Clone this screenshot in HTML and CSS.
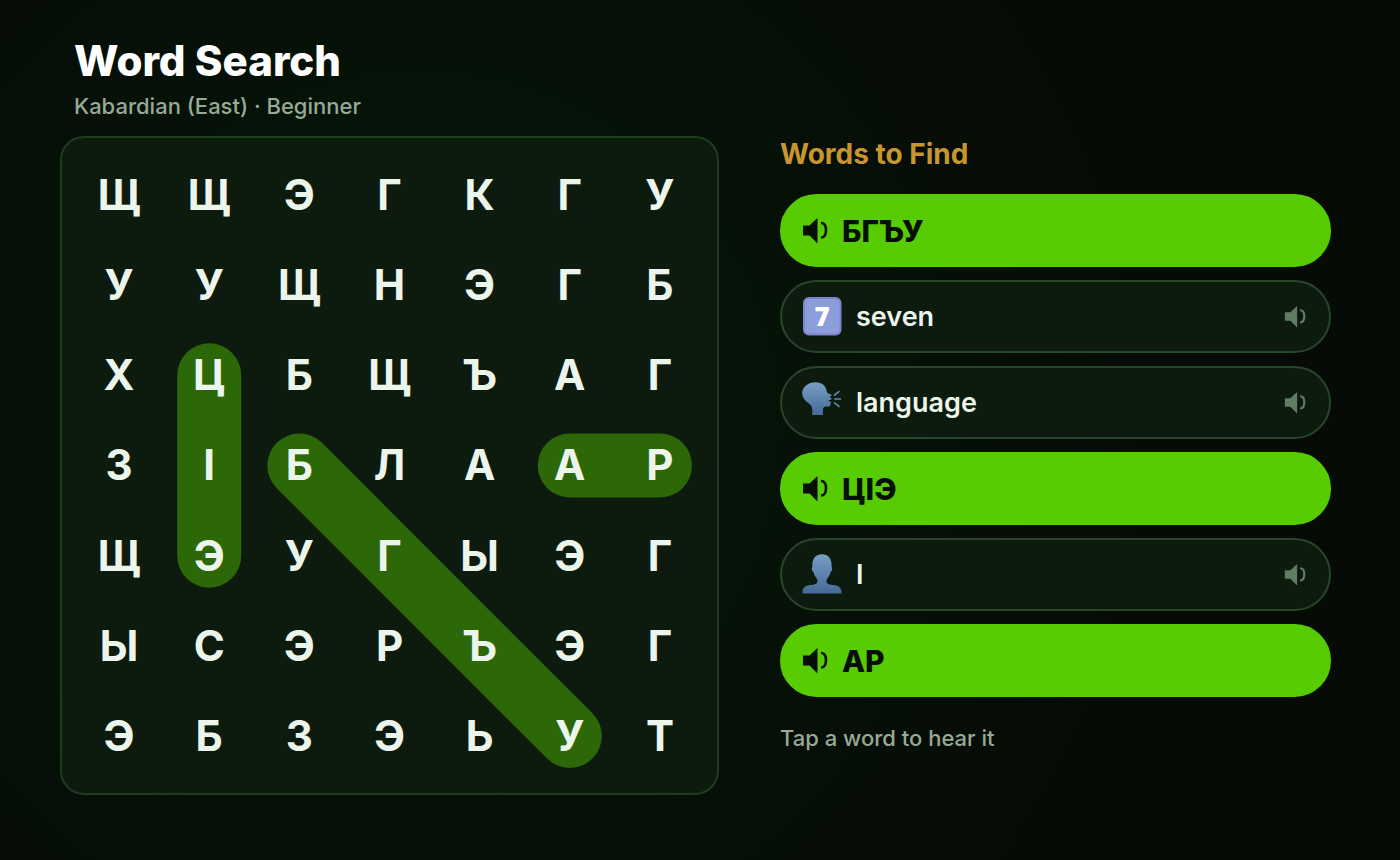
FILE: index.html
```html
<!DOCTYPE html>
<html lang="en">

<head>
    <meta charset="UTF-8">
    <meta name="viewport" content="width=device-width, initial-scale=1.0">
    <title>Word Search</title>
    <link rel="stylesheet" href="styles.css">
</head>

<body>
    <!-- shared icons -->
    <svg class="sprite" aria-hidden="true">
        <symbol id="speaker" viewBox="0 0 26 26">
            <path d="M1 7.500h6.500L15.500 0v25.500L7.500 17.500H1z" fill="currentColor" />
            <path d="M19 5c3.200 0 5 3 5 7.200s-1.800 7.300-5 7.300" fill="none" stroke="currentColor" stroke-width="2.600" />
        </symbol>
        <linearGradient id="blue" x1="0" y1="0" x2="0" y2="1">
            <stop offset="0" stop-color="#789fc4" />
            <stop offset="1" stop-color="#456a98" />
        </linearGradient>
    </svg>

    <main>
        <header>
            <h1>Word Search</h1>
            <p class="subtitle">Kabardian (East) · Beginner</p>
        </header>

        <section class="board">
            <svg class="marks" viewBox="0 0 7 7" aria-hidden="true">
                <path d="M1.500 2.500V4.500M2.500 3.500L5.500 6.500M5.500 3.500H6.500" />
            </svg>
            <div class="letters">
                <span>Щ</span><span>Щ</span><span>Э</span><span>Г</span><span>К</span><span>Г</span><span>У</span>
                <span>У</span><span>У</span><span>Щ</span><span>Н</span><span>Э</span><span>Г</span><span>Б</span>
                <span>Х</span><span>Ц</span><span>Б</span><span>Щ</span><span>Ъ</span><span>А</span><span>Г</span>
                <span>З</span><span>І</span><span>Б</span><span>Л</span><span>А</span><span>А</span><span>Р</span>
                <span>Щ</span><span>Э</span><span>У</span><span>Г</span><span>Ы</span><span>Э</span><span>Г</span>
                <span>Ы</span><span>С</span><span>Э</span><span>Р</span><span>Ъ</span><span>Э</span><span>Г</span>
                <span>Э</span><span>Б</span><span>З</span><span>Э</span><span>Ь</span><span>У</span><span>Т</span>
            </div>
        </section>

        <section class="words">
            <h2>Words to Find</h2>
            <ul>
                <li><button type="button" class="word found">
                    <svg class="speaker"><use href="#speaker" /></svg>
                    <span>БГЪУ</span>
                </button></li>
                <li><button type="button" class="word">
                    <svg class="picture" viewBox="0 0 40 40" aria-hidden="true">
                        <rect x="1" y="1" width="38.500" height="38.500" rx="6" fill="#7986cb" />
                        <rect x="3" y="3" width="34.500" height="34.500" rx="4" fill="#8c9eda" />
                        <text class="digit" x="20" y="30" text-anchor="middle">7</text>
                    </svg>
                    <span>seven</span>
                    <svg class="speaker"><use href="#speaker" /></svg>
                </button></li>
                <li><button type="button" class="word">
                    <svg class="picture" viewBox="0 0 40 40" aria-hidden="true">
                        <path fill="url(#blue)" d="M10 33C10.500 29 10.500 26 9 23.500C7.500 21.500 5 20.500 3 18C1 15.500 0 13.500 .2 10.500C.6 4.500 6.500 .2 13.500 .2C20 .2 24.300 4 24.700 9.500C24.800 11 26.500 11.300 29.500 13C30.200 13.700 29 14.300 27.300 14.800C27.800 15.700 29.800 16 29.600 17C29.400 18 26.500 18.200 26.500 18.700C26.500 19.200 29.300 19.500 29.200 20.500C29.100 21.200 28.200 21 28.400 22C28.600 24 27.500 24.800 25.500 24.600C22.500 24.300 21.300 25 21 27.500C20.800 29.500 21 31 21 33Z" />
                        <path fill="none" stroke="#608cb4" stroke-width="1.600" d="M32.300 17H39M32 13.500L37.500 9.200M32 20.500L37.500 24.900" />
                    </svg>
                    <span>language</span>
                    <svg class="speaker"><use href="#speaker" /></svg>
                </button></li>
                <li><button type="button" class="word found">
                    <svg class="speaker"><use href="#speaker" /></svg>
                    <span>ЦІЭ</span>
                </button></li>
                <li><button type="button" class="word">
                    <svg class="picture" viewBox="0 0 40 40" aria-hidden="true">
                        <path fill="url(#blue)" d="M.5 39.500C.3 35 2 32.500 6 31.500C9 30.800 14 31 15.300 28.500C16 27 15.300 25.500 14.500 24.200C13 22.500 12 20.500 11.500 18C10 17.500 9.300 14 10.400 13C9.800 5.500 13 .3 20 .3C27 .3 30.200 5.500 29.600 13C30.700 14 30 17.500 28.500 18C28 20.500 27 22.500 25.500 24.200C24.700 25.500 24 27 24.700 28.500C26 31 31 30.800 34 31.500C38 32.500 39.700 35 39.500 39.500Z" />
                    </svg>
                    <span>I</span>
                    <svg class="speaker"><use href="#speaker" /></svg>
                </button></li>
                <li><button type="button" class="word found">
                    <svg class="speaker"><use href="#speaker" /></svg>
                    <span>АР</span>
                </button></li>
            </ul>
            <p class="hint">Tap a word to hear it</p>
        </section>
    </main>
</body>

</html>
```
FILE: styles.css
```css
* {
    box-sizing: border-box;
}

body {
    margin: 0;
    min-height: 100vh;
    background: #060b06 radial-gradient(circle at 30% 50%, #05190a 0, #060b06 720px);
    color: #ebf5eb;
    font-family: Inter, "Noto Sans", sans-serif;
}

h1,
h2,
p,
ul {
    margin: 0;
    padding: 0;
}

.sprite {
    position: absolute;
    width: 0;
    height: 0;
}

main {
    display: grid;
    grid-template-columns: 659fr 551fr;
    column-gap: 61px;
    row-gap: 16px;
    padding: 36px 69px 64px 60px;
}

header {
    grid-column: 1 / -1;
    padding-left: 14px;
}

h1 {
    color: #fff;
    font-size: 42px;
    font-weight: 800;
    line-height: 50px;
}

.subtitle,
.hint {
    color: #96aa96;
    font-size: 22px;
    font-weight: 500;
    line-height: 28px;
}

.subtitle {
    margin-top: 6px;
}

/* letter grid, found words are drawn as thick round lines below the text */
.board {
    display: grid;
    align-self: start;
    aspect-ratio: 1;
    padding: 12px;
    border: 2px solid #1e3c1e;
    border-radius: 24px;
    background: #0d1b0e;
}

.marks,
.letters {
    grid-area: 1 / 1;
    width: 100%;
    height: 100%;
}

.marks path {
    fill: none;
    stroke: #2d6808;
    stroke-width: 0.71;
    stroke-linecap: round;
}

.letters {
    display: grid;
    grid-template-columns: repeat(7, 1fr);
    grid-template-rows: repeat(7, 1fr);
    place-items: center;
    font-size: 42px;
    font-weight: 700;
    line-height: 50px;
    z-index: 1;
}

h2 {
    color: #c8962d;
    font-size: 28px;
    font-weight: 700;
    line-height: 36px;
}

ul {
    display: grid;
    gap: 13px;
    margin: 22px 0 27px;
    list-style: none;
}

.word {
    display: flex;
    align-items: center;
    gap: 14px;
    width: 100%;
    height: 73px;
    padding: 0 23px 0 20px;
    border: 2px solid #284628;
    border-radius: 37px;
    background: #0d1b0e;
    color: #ebf5eb;
    font: 600 27px/36px Inter, "Noto Sans", sans-serif;
    text-align: left;
    cursor: pointer;
}

.word span {
    flex: 1;
}

.picture {
    width: 40px;
    height: 40px;
    margin-bottom: 2px;
}

.digit {
    fill: #fff;
    font: 800 26px "Open Sans", sans-serif;
}

.speaker {
    width: 22px;
    height: 22px;
    color: #5f7d62;
}

.found {
    border-color: #58cc02;
    background: #58cc02;
    color: #050f05;
    font-size: 30px;
    font-weight: 800;
}

.found .speaker {
    width: 26px;
    height: 26px;
    color: #050f05;
}
```
